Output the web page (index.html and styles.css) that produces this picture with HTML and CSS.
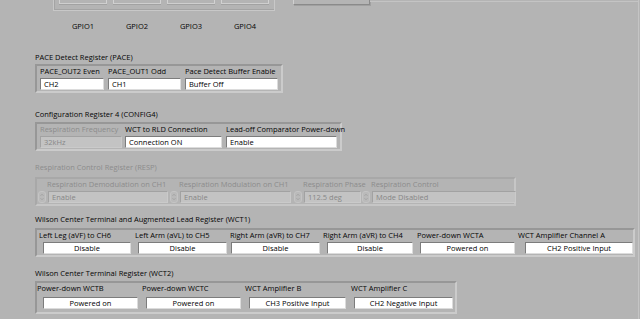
FILE: index.html
```html
<!DOCTYPE html>
<html>
<head>
<meta charset="utf-8">
<link rel="stylesheet" href="styles.css">
</head>
<body>
<div class="panel">
  <div class="top">
    <div class="gpio-frame">
      <div class="gbtn"></div><div class="gbtn"></div><div class="gbtn"></div><div class="gbtn"></div>
    </div>
    <div class="bigbtn"></div>
    <div class="topline"></div>
  </div>
  <div class="gpio-labels">
    <span>GPIO1</span><span>GPIO2</span><span>GPIO3</span><span>GPIO4</span>
  </div>

  <section class="reg pace">
    <div class="title">PACE Detect Register (PACE)</div>
    <div class="cluster">
      <div class="col w68"><div class="lbl">PACE_OUT2 Even</div><div class="inp left" style="width:64px">CH2</div></div>
      <div class="col w77"><div class="lbl">PACE_OUT1 Odd</div><div class="inp left" style="width:73px">CH1</div></div>
      <div class="col"><div class="lbl">Pace Detect Buffer Enable</div><div class="inp left" style="width:93px">Buffer Off</div></div>
    </div>
  </section>

  <section class="reg cfg">
    <div class="title">Configuration Register 4 (CONFIG4)</div>
    <div class="cluster">
      <div class="col w85 dis"><div class="lbl">Respiration Frequency</div><div class="inp left" style="width:82px">32kHz</div></div>
      <div class="col w101"><div class="lbl">WCT to RLD Connection</div><div class="inp left" style="width:97px">Connection ON</div></div>
      <div class="col"><div class="lbl">Lead-off Comparator Power-down</div><div class="inp left" style="width:111px">Enable</div></div>
    </div>
  </section>

  <section class="reg resp dis">
    <div class="title">Respiration Control Register (RESP)</div>
    <div class="cluster">
      <div class="col w132"><div class="lbl ind">Respiration Demodulation on CH1</div><div class="ring"><span class="spin"><svg width="7" height="10" viewBox="0 0 7 10"><path d="M1.8 3.6 L3.5 1.8 L5.2 3.6 M1.8 6.4 L3.5 8.2 L5.2 6.4" fill="none" stroke="#9c9c9c" stroke-width="0.9"/></svg></span><div class="inp left" style="width:120px">Enable</div></div></div>
      <div class="col w124"><div class="lbl ind">Respiration Modulation on CH1</div><div class="ring"><span class="spin"><svg width="7" height="10" viewBox="0 0 7 10"><path d="M1.8 3.6 L3.5 1.8 L5.2 3.6 M1.8 6.4 L3.5 8.2 L5.2 6.4" fill="none" stroke="#9c9c9c" stroke-width="0.9"/></svg></span><div class="inp left" style="width:111px">Enable</div></div></div>
      <div class="col w68"><div class="lbl ind">Respiration Phase</div><div class="ring"><span class="spin"><svg width="7" height="10" viewBox="0 0 7 10"><path d="M1.8 3.6 L3.5 1.8 L5.2 3.6 M1.8 6.4 L3.5 8.2 L5.2 6.4" fill="none" stroke="#9c9c9c" stroke-width="0.9"/></svg></span><div class="inp left" style="width:57px">112.5 deg</div></div></div>
      <div class="col"><div class="lbl ind">Respiration Control</div><div class="ring"><span class="spin"><svg width="7" height="10" viewBox="0 0 7 10"><path d="M1.8 3.6 L3.5 1.8 L5.2 3.6 M1.8 6.4 L3.5 8.2 L5.2 6.4" fill="none" stroke="#9c9c9c" stroke-width="0.9"/></svg></span><div class="inp left" style="width:144px">Mode Disabled</div></div></div>
    </div>
  </section>

  <section class="reg wct1">
    <div class="title">Wilson Center Terminal and Augmented Lead Register (WCT1)</div>
    <div class="cluster">
      <div class="col" style="width:96px"><div class="lbl">Left Leg (aVF) to CH6</div><div class="inp ctr o4" style="width:88px">Disable</div></div>
      <div class="col" style="width:95px"><div class="lbl">Left Arm (aVL) to CH5</div><div class="inp ctr o3" style="width:89px">Disable</div></div>
      <div class="col" style="width:93px"><div class="lbl">Right Arm (aVR) to CH7</div><div class="inp ctr o1" style="width:89px">Disable</div></div>
      <div class="col" style="width:94px"><div class="lbl">Right Arm (aVR) to CH4</div><div class="inp ctr o4" style="width:86px">Disable</div></div>
      <div class="col" style="width:101px"><div class="lbl">Power-down WCTA</div><div class="inp ctr o3" style="width:95px">Powered on</div></div>
      <div class="col"><div class="lbl">WCT Amplifier Channel A</div><div class="inp ctr o7" style="width:108px">CH2 Positive Input</div></div>
    </div>
  </section>

  <section class="reg wct2">
    <div class="title">Wilson Center Terminal Register (WCT2)</div>
    <div class="cluster">
      <div class="col" style="width:105px"><div class="lbl">Power-down WCTB</div><div class="inp ctr o6" style="width:95px">Powered on</div></div>
      <div class="col" style="width:103px"><div class="lbl">Power-down WCTC</div><div class="inp ctr o4" style="width:95px">Powered on</div></div>
      <div class="col" style="width:106px"><div class="lbl">WCT Amplifier B</div><div class="inp ctr o4" style="width:97px">CH3 Positive Input</div></div>
      <div class="col"><div class="lbl">WCT Amplifier C</div><div class="inp ctr o3" style="width:99px">CH2 Negative Input</div></div>
    </div>
  </section>
</div>
</body>
</html>
```
FILE: styles.css
```css
* { box-sizing: border-box; }
html, body { margin: 0; padding: 0; }
body {
  background: #b4b4b4;
  font-family: "Open Sans", "DejaVu Sans", sans-serif;
  font-size: 7.5px;
  color: #050505;
}
.panel {
  width: 639px;
  height: 319px;
  overflow: hidden;
  background: #b4b4b4;
  border-right: 1px solid #c4c4c4;
}
.top {
  display: flex;
  align-items: flex-start;
  height: 12px;
}
.gpio-frame {
  margin-left: 53px;
  width: 222px;
  height: 11px;
  border: 1px solid #c8c8c8;
  border-top: none;
  box-shadow: inset 1px -1px 0 #a4a4a4;
  display: flex;
  gap: 6px;
  padding-left: 5px;
}
.gbtn {
  width: 48px;
  height: 4px;
  border: 1px solid #d2d2d2;
  border-top: none;
  border-bottom-color: #cfcfcf;
  box-shadow: 0 1px 0 #a2a2a2;
}
.bigbtn {
  margin-left: 18px;
  width: 77px;
  height: 5px;
  border: 1px solid #d0d0d0;
  border-top: none;
  border-right-color: #8a8a8a;
  border-bottom-color: #8a8a8a;
  box-shadow: 1px 1px 0 #a0a0a0;
}
.topline {
  flex: 1;
  height: 1px;
  margin-top: 1px;
  background: #c4c4c4;
}
.gpio-labels {
  display: flex;
  margin-left: 59px;
  gap: 6px;
  margin-top: 8px;
  line-height: 12px;
}
.gpio-labels span {
  width: 48px;
  text-align: center;
}
.title {
  line-height: 12px;
  height: 12px;
  margin-left: 35px;
  white-space: nowrap;
}
.cluster {
  margin-left: 35px;
  display: flex;
  border: 2px solid;
  border-color: #979797 #cbcbcb #cbcbcb #979797;
  padding: 0 2px 1px 2px;
}
.col { display: flex; flex-direction: column; flex: none; }
.col:last-child { flex: 1; }
.lbl {
  line-height: 11px;
  height: 11px;
  white-space: nowrap;
  margin-bottom: 1px;
}
.inp {
  height: 12px;
  line-height: 10px;
  background: #fff;
  border: 1px solid;
  border-color: #7c7c7c #dcdcdc #dcdcdc #7c7c7c;
  white-space: nowrap;
  overflow: hidden;
  color: #000;
}
.inp.left { padding-left: 3px; }
.inp.ctr { text-align: center; }
.o1 { margin-left: 1px; }
.o3 { margin-left: 3px; }
.o4 { margin-left: 4px; }
.o6 { margin-left: 6px; }
.o7 { margin-left: 7px; }
.w68 { width: 68px; }
.w77 { width: 77px; }
.w85 { width: 85px; }
.w101 { width: 101px; }
.w124 { width: 124px; }
.w132 { width: 132px; }

.pace { margin-top: 19px; }
.pace .cluster { width: 248px; padding-left: 3px; margin-top: 1px; }

.cfg { margin-top: 15px; }
.cfg .cluster { width: 307px; margin-top: 2px; padding-left: 3px; }

.dis .lbl, .dis .title { color: #8c8c8c; }
.dis .inp {
  background: #c3c3c3;
  color: #878787;
  border-color: #a2a2a2 #cacaca #cacaca #a2a2a2;
}
.resp { margin-top: 10px; }
.resp .cluster {
  width: 481px;
  margin-top: 4px;
  padding-left: 1px;
  border-color: #a8a8a8 #c6c6c6 #c6c6c6 #a8a8a8;
}
.lbl.ind { padding-left: 9px; }
.ring { display: flex; align-items: center; }
.spin {
  width: 8px;
  height: 12px;
  display: flex;
  align-items: center;
  justify-content: center;
  margin-right: 2px;
  border: 1px solid #c4c4c4;
  border-radius: 3px;
  background: #bababa;
}
.spin svg { display: block; }

.wct1 { margin-top: 7px; }
.wct1 .cluster { width: 600px; margin-top: 3px; padding-left: 2px; padding-right: 0; }
.wct2 { margin-top: 10px; }
.wct2 .cluster { width: 422px; margin-top: 2px; padding-left: 0; padding-bottom: 3px; }
.wct2 .lbl { margin-bottom: 3px; }
```
